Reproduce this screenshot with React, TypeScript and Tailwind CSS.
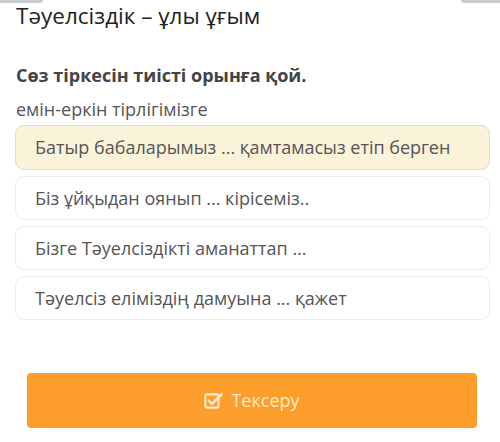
import React from 'react';

const options = [
  'Батыр бабаларымыз ... қамтамасыз етіп берген',
  'Біз ұйқыдан оянып ... кірісеміз..',
  'Бізге Тәуелсіздікті аманаттап ...',
  'Тәуелсіз еліміздің дамуына ... қажет',
];

const CheckSquare: React.FC = () => (
  <svg width="19" height="17" viewBox="0 0 18 16" fill="none">
    <rect x="1.2" y="2.2" width="12.6" height="12.6" rx="2" stroke="currentColor" strokeWidth="2" />
    <path d="M4.5 8.2 L7.6 11.2 L16.5 2.3" stroke="currentColor" strokeWidth="2.4" strokeLinecap="round" strokeLinejoin="round" />
  </svg>
);

export default function App() {
  return (
    <div className="relative w-[500px] h-[442px] bg-white overflow-hidden font-['Open_Sans',sans-serif]">
      {/* cut-off toolbar buttons at the top */}
      <div className="absolute left-0 top-0 w-[43px] h-[3px] rounded-br-md bg-[#c7ccd3]" />
      <div className="absolute right-0 top-0 w-[39px] h-[3px] rounded-bl-md bg-[#c7ccd3]" />

      <div className="px-4">
        <h1 className="text-[22.5px] leading-[32px] text-[#222]">Тәуелсіздік – ұлы ұғым</h1>
        <p className="mt-[30px] text-[18px] leading-[26px] font-bold text-[#444]">Сөз тіркесін тиісті орынға қой.</p>
        <p className="mt-[8px] text-[18px] leading-[26px] text-[#555]">емін-еркін тірлігімізге</p>
      </div>

      <div className="mt-[3px] ml-[15px] w-[475px] flex flex-col gap-[6px]">
        {options.map((o, i) => (
          <div
            key={o}
            className={
              i === 0
                ? 'h-[45px] flex items-center px-[19px] rounded-[9px] border border-[#eadcae] bg-[#fbf2da] text-[18px] text-[#555]'
                : 'h-[44px] flex items-center px-[19px] rounded-[9px] border border-[#ececec] bg-white text-[18px] text-[#555]'
            }
          >
            {o}
          </div>
        ))}
      </div>

      <div className="mt-[53px] ml-[27px] w-[450px] h-[55px] rounded-[4px] bg-[#fd9e2c] flex items-center justify-center gap-[8px] text-[#fdebcd]">
        <CheckSquare />
        <span className="text-[18px]">Тексеру</span>
      </div>
    </div>
  );
}
